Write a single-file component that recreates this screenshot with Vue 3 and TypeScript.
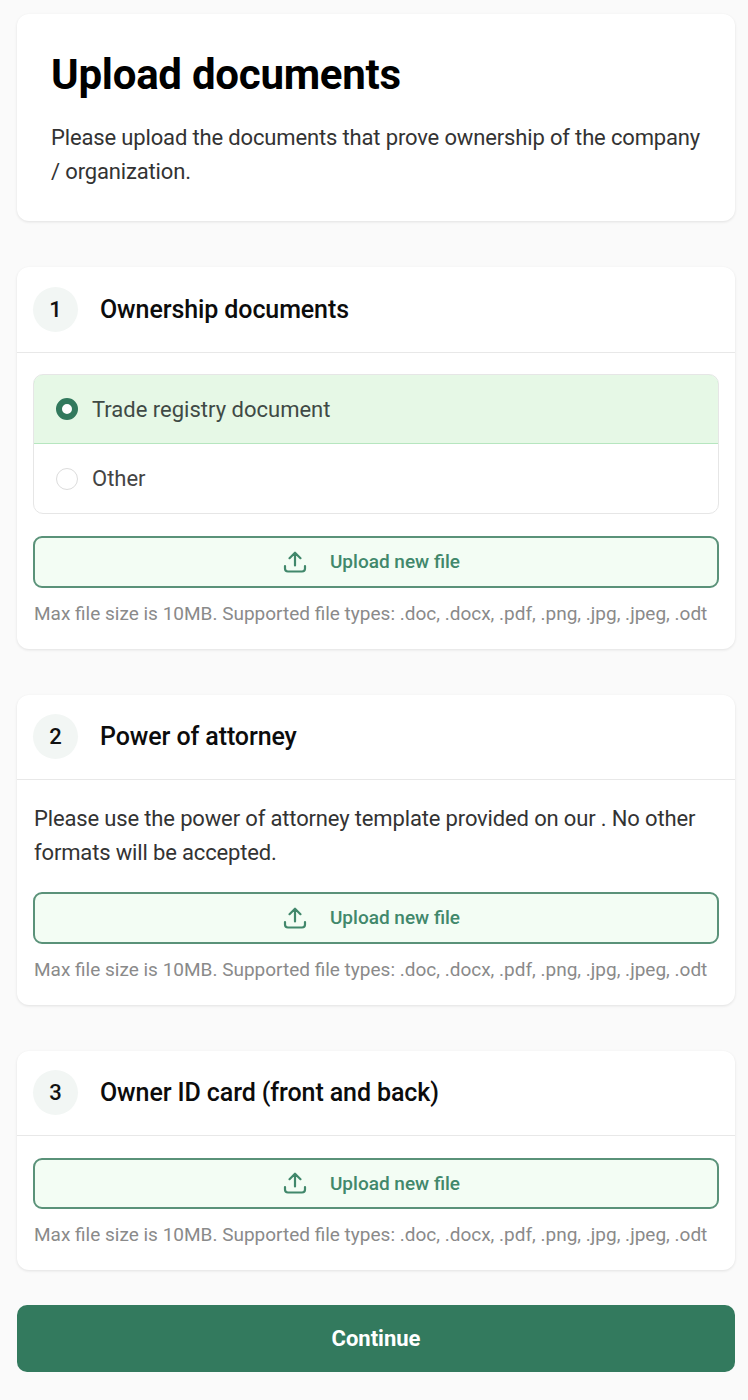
<script setup lang="ts">
interface Section { n: number; title: string; text?: string; radios?: boolean }
const sections: Section[] = [
  { n: 1, title: 'Ownership documents', radios: true },
  { n: 2, title: 'Power of attorney', text: 'Please use the power of attorney template provided on our . No other formats will be accepted.' },
  { n: 3, title: 'Owner ID card (front and back)' },
]
const hint = 'Max file size is 10MB. Supported file types: .doc, .docx, .pdf, .png, .jpg, .jpeg, .odt'
</script>

<template>
  <main class="page">
    <section class="card intro">
      <h1>Upload documents</h1>
      <p>Please upload the documents that prove ownership of the company / organization.</p>
    </section>

    <section v-for="s in sections" :key="s.n" class="card">
      <header class="head">
        <span class="num">{{ s.n }}</span>
        <h2>{{ s.title }}</h2>
      </header>
      <div class="body">
        <div v-if="s.radios" class="radios">
          <div class="radio on"><span class="dot"></span><span>Trade registry document</span></div>
          <div class="radio"><span class="dot"></span><span>Other</span></div>
        </div>
        <p v-if="s.text" class="text">{{ s.text }}</p>
        <button class="upload" type="button">
          <svg width="24" height="24" viewBox="0 0 24 24" fill="none" stroke="currentColor" stroke-width="2.200" stroke-linecap="round" stroke-linejoin="round">
            <path d="M12 15.500V2.800M6.500 8.200 12 2.700l5.500 5.500M2 16v2.500a3 3 0 0 0 3 3h14a3 3 0 0 0 3-3V16" />
          </svg>
          <span>Upload new file</span>
        </button>
        <p class="hint">{{ hint }}</p>
      </div>
    </section>

    <button class="continue" type="button">Continue</button>
  </main>
</template>

<style>
body { background: #fafafa; }
</style>

<style scoped>
.page {
  box-sizing: border-box;
  width: 748px;
  height: 1400px;
  padding: 14px 13px 0 17px;
  display: flex;
  flex-direction: column;
  gap: 46px;
  background: #fafafa;
  font-family: Roboto, "Liberation Sans", sans-serif;
  overflow: hidden;
}
.card {
  background: #fff;
  border-radius: 12px;
  box-shadow: 0 1px 3px rgba(0, 0, 0, 0.1);
}
.intro { box-sizing: border-box; height: 207px; padding: 35px 34px 0; }
h1 {
  margin: 0;
  font-size: 42px;
  line-height: 52px;
  font-weight: 700;
  color: #000;
  letter-spacing: -0.25px;
}
.intro p {
  margin: 20px 0 0;
  font-size: 22px;
  line-height: 34px;
  color: #333;
  letter-spacing: -0.15px;
}
.head {
  box-sizing: border-box;
  height: 85.500px;
  display: flex;
  align-items: center;
  gap: 22px;
  padding: 0 16px;
  border-bottom: 1px solid #e8e8e8;
}
.num {
  width: 45px;
  height: 45px;
  border-radius: 50%;
  background: #f2f6f4;
  display: flex;
  align-items: center;
  justify-content: center;
  font-size: 22px;
  font-weight: 500;
  color: #111;
}
h2 {
  margin: 0;
  font-size: 25px;
  font-weight: 500;
  color: #0c0c0c;
  letter-spacing: -0.1px;
}
.body { padding: 21.500px 16px 0; }
.radios {
  border: 1px solid #e6e6e6;
  border-radius: 10px;
  margin-bottom: 22px;
  overflow: hidden;
}
.radio {
  box-sizing: border-box;
  height: 69px;
  display: flex;
  align-items: center;
  gap: 14px;
  padding: 0 22px;
  font-size: 22px;
  color: #444;
}
.radio.on {
  height: 70px;
  margin: -1px -1px 0;
  background: #e6f8e6;
  border: 1px solid #b6e6bf;
  border-radius: 10px 10px 0 0;
  color: #3f4a45;
}
.dot {
  box-sizing: border-box;
  width: 22px;
  height: 22px;
  border-radius: 50%;
  border: 1.500px solid #dcdcdc;
  background: #fff;
}
.on .dot { border: 6.500px solid #32795d; }
.text {
  margin: 0 0 22.500px;
  padding-left: 1px;
  font-size: 22px;
  line-height: 34px;
  color: #333;
  letter-spacing: -0.15px;
}
.upload {
  box-sizing: border-box;
  width: 100%;
  height: 51.500px;
  display: flex;
  align-items: center;
  justify-content: center;
  gap: 23px;
  border: 2px solid #5a9279;
  border-radius: 9px;
  background: #f3fdf4;
  color: #41886b;
  font-family: inherit;
  font-size: 19px;
  font-weight: 500;
  padding: 0 9px 0 0;
}
.hint {
  margin: 14px 0 0;
  padding: 0 0 23px 1px;
  font-size: 19px;
  line-height: 24px;
  color: #8a8a8a;
  white-space: nowrap;
}
.continue {
  margin-top: -11px;
  flex: none;
  height: 67px;
  border: 0;
  border-radius: 10px;
  background: #337a5e;
  color: #fff;
  font-family: inherit;
  font-size: 22px;
  font-weight: 700;
}
</style>
